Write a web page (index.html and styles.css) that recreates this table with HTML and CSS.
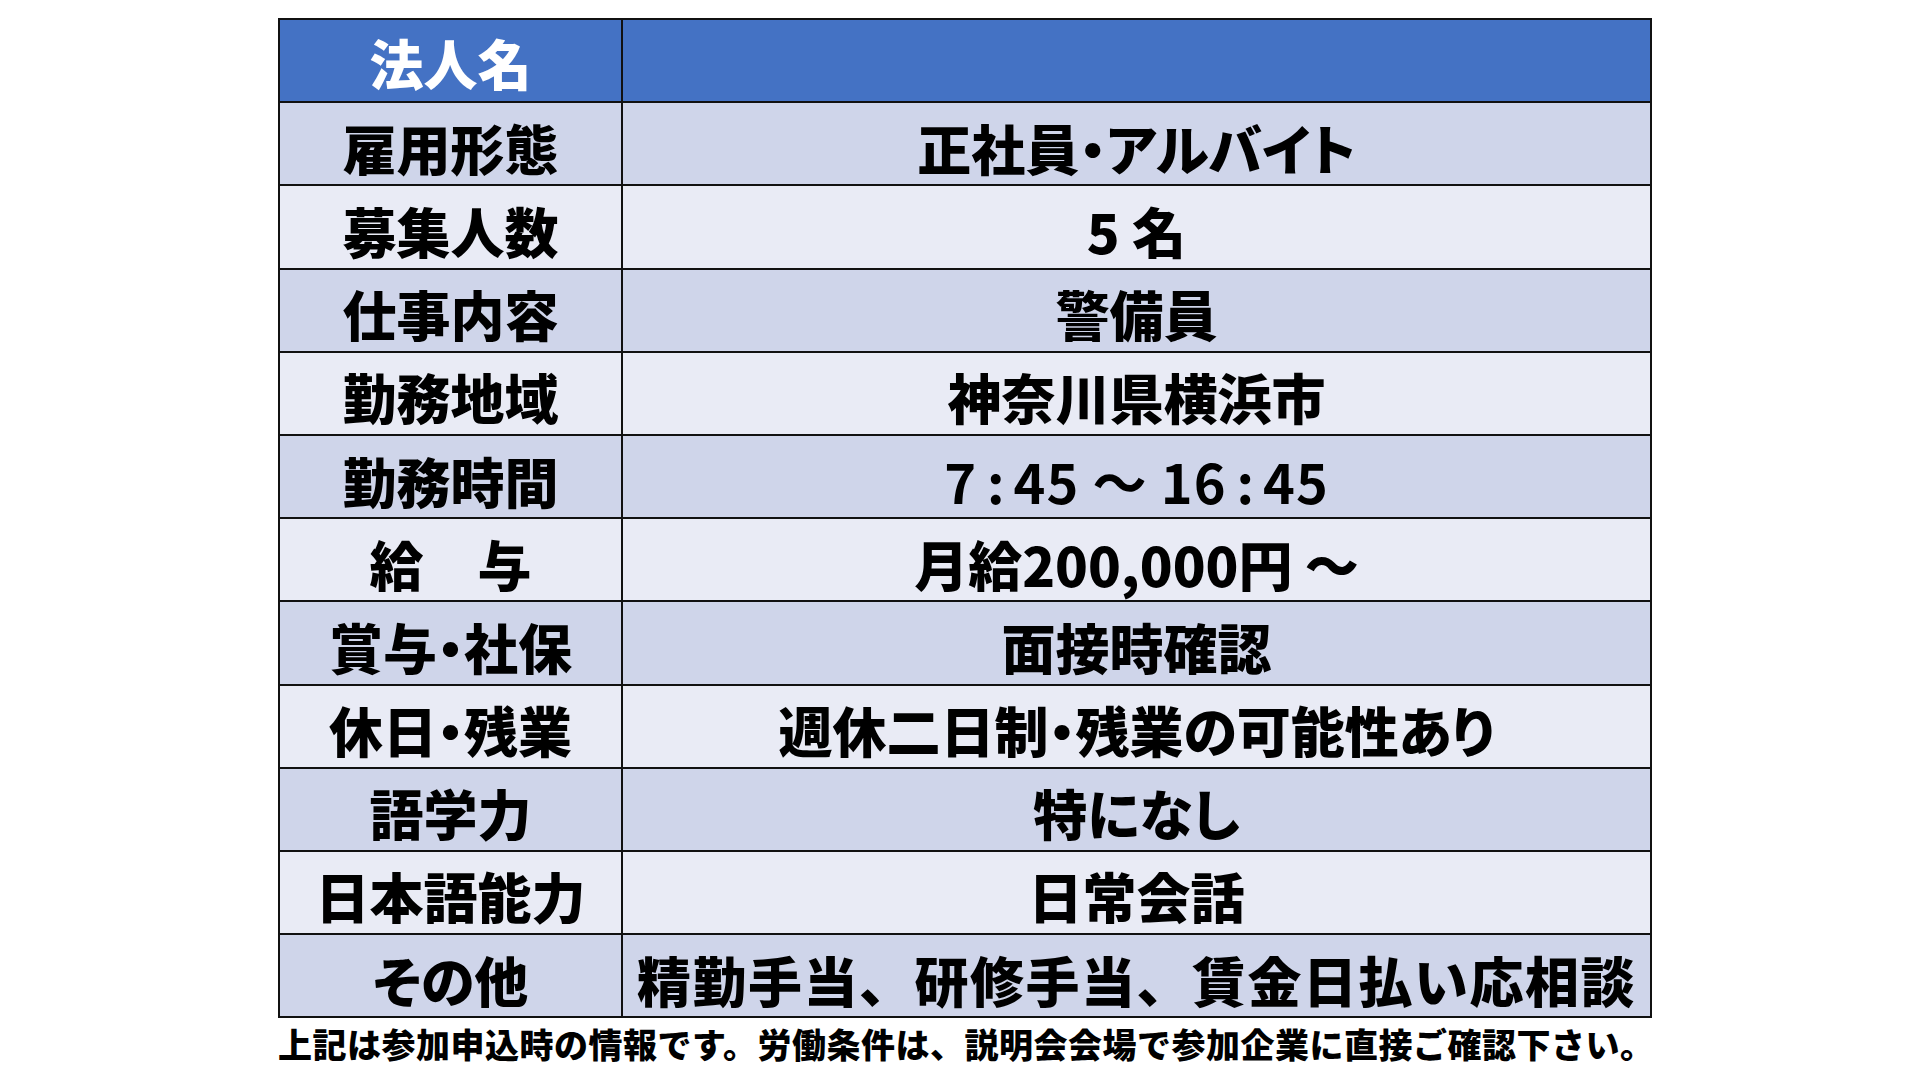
FILE: index.html
```html
<!DOCTYPE html>
<html lang="ja">
<head>
<meta charset="utf-8">
<title>求人情報</title>
<link rel="stylesheet" href="styles.css">
</head>
<body>
<main class="page">
  <table class="info">
    <tr class="head"><th>法人名</th><td></td></tr>
    <tr class="dark"><th>雇用形態</th><td>正社員・アルバイト</td></tr>
    <tr class="light"><th>募集人数</th><td>5 名</td></tr>
    <tr class="dark"><th>仕事内容</th><td>警備員</td></tr>
    <tr class="light"><th>勤務地域</th><td>神奈川県横浜市</td></tr>
    <tr class="dark"><th>勤務時間</th><td class="num">7<span class="colon">:</span>45 ～ 16<span class="colon">:</span>45</td></tr>
    <tr class="light"><th>給　与</th><td>月給200,000円 ～</td></tr>
    <tr class="dark"><th>賞与・社保</th><td>面接時確認</td></tr>
    <tr class="light"><th>休日・残業</th><td>週休二日制・残業の可能性あり</td></tr>
    <tr class="dark"><th>語学力</th><td>特になし</td></tr>
    <tr class="light"><th>日本語能力</th><td>日常会話</td></tr>
    <tr class="dark"><th>その他</th><td class="wide">精勤手当、研修手当、賃金日払い応相談</td></tr>
  </table>
  <p class="note">上記は参加申込時の情報です。労働条件は、説明会会場で参加企業に直接ご確認下さい。</p>
</main>
</body>
</html>
```
FILE: styles.css
```css
html, body {
  margin: 0;
  padding: 0;
  background: #ffffff;
}
.page {
  padding: 18px 0 0 278px;
  font-family: "Noto Sans CJK JP", "Noto Sans", sans-serif;
  color: #000;
}
.info {
  border-collapse: collapse;
  width: 1374px;
  table-layout: fixed;
}
.info th, .info td {
  border: 2px solid #111;
  height: 73.2px;
  padding: 8px 0 0 0;
  text-align: center;
  vertical-align: middle;
  font-size: 54px;
  font-weight: 900;
  line-height: 1;
  white-space: nowrap;
  font-feature-settings: "palt" 1;
}
.info th {
  width: 341px;
}
.head th, .head td {
  background: #4472c4;
  color: #fff;
}
.head th {
  padding-top: 4px;
  height: 77.2px;
}
.dark th, .dark td {
  background: #cfd5ea;
}
.light th, .light td {
  background: #e9ebf5;
}
.info td.num {
  font-weight: 700;
  letter-spacing: 1px;
  font-feature-settings: normal;
}
.colon {
  margin: 0 8px 0 10px;
}
.info td.wide {
  font-feature-settings: normal;
  letter-spacing: 1.5px;
}
.note {
  margin: 6px 0 0 0;
  font-size: 34px;
  font-weight: 900;
  line-height: 1.2;
  letter-spacing: 0.5px;
  white-space: nowrap;
}
```
